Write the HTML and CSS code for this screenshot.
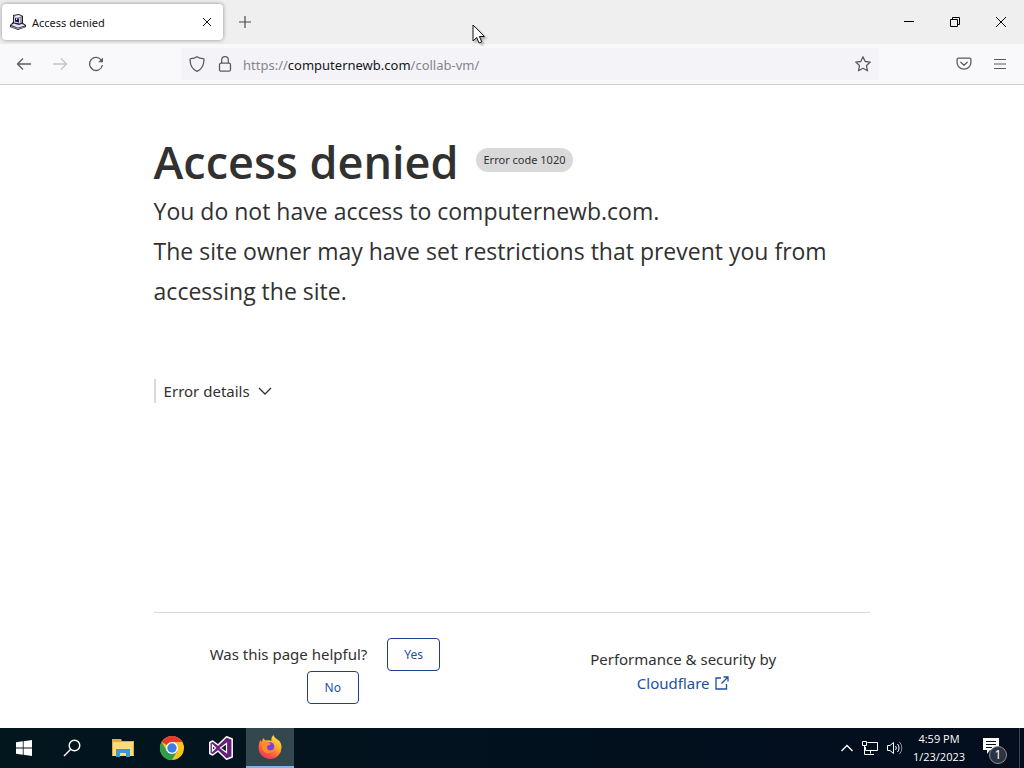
FILE: index.html
```html
<!DOCTYPE html>
<html lang="en">
<head>
    <meta charset="UTF-8">
    <meta name="viewport" content="width=device-width, initial-scale=1.0">
    <title>Access denied</title>
    <link rel="stylesheet" href="styles.css">
</head>
<body>
    <div class="tab-bar">
        <div class="tab">
            <svg class="favicon" width="16" height="16" viewBox="0 0 16 16">
                <path d="M3 1l6-1 4 2v7l3 2v2l-8 3-8-3v-2l3-3z" fill="#1c1c2c"/>
                <path d="M3 2l6-1 3 1.500-5 1z" fill="#f2f2f6"/>
                <path d="M4 3l6 .500v6L4 8.500z" fill="#dcdce6"/>
                <path d="M5 4l4 .500v4L5 7.500z" fill="#15156a"/>
                <path d="M6 4.500h1v1.500H6z" fill="#fff"/>
                <path d="M10 3.500l2-1v6l-2 1z" fill="#9a9aaa"/>
                <path d="M1 11l3-1.500 5 1.500 3-1.200 3 1.700-7 2.200z" fill="#e4e4ec"/>
                <path d="M1 12l7 2.200 7-2v.8l-7 2.200L1 13z" fill="#a3a3b2"/>
            </svg>
            <span class="tab-title">Access denied</span>
            <button class="icon-btn tab-close" aria-label="Close tab">
                <svg width="8" height="8" viewBox="0 0 8 8"><path d="M0 0l8 8M8 0L0 8" stroke="#15141a"/></svg>
            </button>
        </div>
        <button class="icon-btn new-tab" aria-label="New tab">
            <svg width="12" height="12" viewBox="0 0 12 12"><path d="M6 0v12M0 6h12" stroke="#4a4a52" stroke-width="1.2"/></svg>
        </button>
        <div class="window-buttons">
            <button class="icon-btn" aria-label="Minimize">
                <svg width="10" height="10" viewBox="0 0 10 10"><path d="M0 4.500h10" stroke="#000"/></svg>
            </button>
            <button class="icon-btn" aria-label="Restore">
                <svg width="10" height="10" viewBox="0 0 10 10" fill="none" stroke="#000"><path d="M.5 2.500h7v7h-7zM2.500 2.500v-2h7v7h-2"/></svg>
            </button>
            <button class="icon-btn" aria-label="Close">
                <svg width="10" height="10" viewBox="0 0 10 10"><path d="M0 0l10 10M10 0L0 10" stroke="#000"/></svg>
            </button>
        </div>
    </div>

    <div class="nav-bar">
        <div class="nav-buttons">
            <button class="icon-btn" aria-label="Back">
                <svg width="16" height="16" viewBox="0 0 16 16" fill="none" stroke="#5b5b66" stroke-width="1.3"><path d="M15 8H1.500M7 2.500L1.500 8 7 13.500"/></svg>
            </button>
            <button class="icon-btn" aria-label="Forward" disabled>
                <svg width="16" height="16" viewBox="0 0 16 16" fill="none" stroke="#c4c4c9" stroke-width="1.3"><path d="M1 8h13.500M9 2.500L14.500 8 9 13.500"/></svg>
            </button>
            <button class="icon-btn" aria-label="Reload">
                <svg width="16" height="16" viewBox="0 0 16 16"><path d="M13.500 4.500A6.500 6.500 0 1 0 14.400 9" fill="none" stroke="#5b5b66" stroke-width="1.3"/><path d="M15 1.500V6.300H10.200z" fill="#5b5b66"/></svg>
            </button>
        </div>
        <div class="url-bar">
            <svg width="16" height="16" viewBox="0 0 16 16" fill="none" stroke="#5b5b66" stroke-width="1.300"><path d="M8 .7C6.200 2 3.800 2.600 1.700 2.700c-.4 0-.7.3-.7.700C1.200 9 3.500 13.500 8 15.300 12.500 13.500 14.800 9 15 3.400c0-.4-.3-.7-.7-.7C12.200 2.600 9.800 2 8 .7z"/></svg>
            <svg width="16" height="16" viewBox="0 0 16 16" fill="none" stroke="#5b5b66" stroke-width="1.300"><rect x="2.500" y="7.200" width="11" height="8" rx="1.500"/><path d="M4.700 7V4a3.300 3.300 0 0 1 6.600 0v3"/></svg>
            <div class="url">https://<span class="host">computernewb.com</span>/collab-vm/</div>
            <button class="icon-btn" aria-label="Bookmark this page">
                <svg width="16" height="16" viewBox="0 0 16 16" fill="none" stroke="#5b5b66" stroke-width="1.300" stroke-linejoin="round"><path d="M8 .800l2.200 4.700 5.100.600-3.800 3.500 1 5.200L8 12.300l-4.500 2.500 1-5.200L.7 6.100l5.100-.6z"/></svg>
            </button>
        </div>
        <div class="nav-menu">
            <button class="icon-btn" aria-label="Save to Pocket">
                <svg width="16" height="16" viewBox="0 0 16 16" fill="none" stroke="#5b5b66" stroke-width="1.300" stroke-linecap="round" stroke-linejoin="round"><path d="M2.500 2.200h11c.8 0 1.400.6 1.400 1.400v3.200a6.900 6.400 0 0 1-13.800 0V3.600c0-.8.6-1.400 1.400-1.400zM4.800 6.300L8 9.300l3.200-3"/></svg>
            </button>
            <button class="icon-btn" aria-label="Open application menu">
                <svg width="16" height="16" viewBox="0 0 16 16"><path d="M2 3.500h12M2 8h12M2 12.500h12" stroke="#5b5b66" stroke-width="1.200"/></svg>
            </button>
        </div>
    </div>

    <main class="content">
        <div class="page">
            <header>
                <div class="title-row">
                    <h1>Access denied</h1>
                    <span class="code-label">Error code 1020</span>
                </div>
                <p>You do not have access to computernewb.com.</p>
                <p>The site owner may have set restrictions that prevent you from accessing the site.</p>
            </header>
            <button class="details-btn">
                Error details
                <svg width="14" height="8" viewBox="0 0 14 8"><path d="M1 1l6 6 6-6" fill="none" stroke="#313131" stroke-width="1.300"/></svg>
            </button>
            <footer>
                <div class="feedback">
                    Was this page helpful?
                    <button class="feedback-btn">Yes</button>
                    <button class="feedback-btn">No</button>
                </div>
                <div class="security">
                    Performance &amp; security by
                    <a href="#">Cloudflare
                        <svg width="14" height="14" viewBox="0 0 14 14" fill="none" stroke="#1d4fa3" stroke-width="1.300"><path d="M6 2H1v11h10.500V8M8.500 1H13v4.500M13 1L6.500 7.500"/></svg>
                    </a>
                </div>
            </footer>
        </div>
    </main>

    <div class="taskbar">
        <button class="task" aria-label="Start">
            <svg width="16" height="16" viewBox="0 0 16 16" fill="#fff"><path d="M0 2.300l6.800-1v6.300H0zM7.600 1.200L16 0v7.600H7.600zM0 8.400h6.800v6.300l-6.800-1zM7.600 8.400H16V16l-8.400-1.200z"/></svg>
        </button>
        <button class="task" aria-label="Search">
            <svg width="18" height="18" viewBox="0 0 18 18" fill="none" stroke="#fff" stroke-width="1.400"><circle cx="11.500" cy="6.500" r="5.300"/><path d="M7.700 10.300L1 17"/></svg>
        </button>
        <div class="apps">
            <button class="task" aria-label="File Explorer">
                <svg width="22" height="20" viewBox="0 0 22 20"><path d="M0 1h9l1 2h12v15H0z" fill="#e6a93a"/><path d="M1 4h20v14H1z" fill="#fbdc7b"/><path d="M4 11h14v8h-4v-4H8v4H4z" fill="#3f97cf"/></svg>
            </button>
            <button class="task" aria-label="Google Chrome">
                <svg width="24" height="24" viewBox="0 0 24 24"><circle cx="12" cy="12" r="12" fill="#f9c51c"/><path d="M12 12L1.600 6A12 12 0 0 1 22.400 6H12z" fill="#e33b2e"/><path d="M1.600 6A12 12 0 0 0 12 24l5.200-9H6.800z" fill="#2c9f4b"/><circle cx="12" cy="12" r="6" fill="#fff"/><circle cx="12" cy="12" r="4.700" fill="#3b7de9"/></svg>
            </button>
            <button class="task" aria-label="Visual Studio">
                <svg width="24" height="24" viewBox="0 0 24 24"><path d="M17.500.8L23.200 3v18l-5.700 2.200L9 15l-5.300 4L.8 17.500v-11L3.700 5 9 9z" fill="#68217a" stroke="#fff" stroke-width="1.500" stroke-linejoin="round"/><path d="M17.500 7.500v9L11.500 12zM3.500 9l3 3-3 3z" fill="#071a22" stroke="#fff" stroke-width="1.200"/></svg>
            </button>
            <button class="task active" aria-label="Firefox">
                <svg width="24" height="24" viewBox="0 0 24 24">
                    <defs>
                        <linearGradient id="flame" x1="0.900" y1="0" x2="0.300" y2="1"><stop offset="0" stop-color="#fff04a"/><stop offset="0.450" stop-color="#ffa52c"/><stop offset="0.750" stop-color="#ff5a3c"/><stop offset="1" stop-color="#f0306c"/></linearGradient>
                    </defs>
                    <path d="M15.500 0c.5 2.500 3 3.500 4.500 5 2 .8 3.500 4 3.500 7A11.500 11.500 0 0 1 .5 13C.5 9.500 1.600 7 2.300 5l1.500 2L5 3l2.500 2.500C10 5 12.500 5.300 13.500 6 13 3.500 14 1.500 15.500 0z" fill="url(#flame)"/>
                    <circle cx="12" cy="11.500" r="4.300" fill="#7a3fe0"/>
                    <path d="M4 8c2-1.500 4-1.500 6.500-.5L13 9c-1.500 1.500-4 1-4 3.500 0 3 4.500 4 7 1.500-1 4-6.500 5.500-9.500 3C4 15 3 11.500 4 8z" fill="#ff8a26"/>
                </svg>
            </button>
        </div>
        <div class="tray">
            <svg width="12" height="8" viewBox="0 0 12 8"><path d="M.5 7L6 1.500 11.500 7" fill="none" stroke="#fff" stroke-width="1.400"/></svg>
            <svg width="16" height="14" viewBox="0 0 16 14" fill="none" stroke="#fff"><path d="M5.500 1.500h10v8h-12V6M8.500 9.500v3M5 13.500h7M.5.500h4v4h-4zM2.500 4.500v9H6"/></svg>
            <svg width="16" height="14" viewBox="0 0 16 14" fill="none" stroke="#fff"><path d="M.5 4.500H3L6.500 1.500v11L3 9.500H.5zM8.500 5a3 3 0 0 1 0 4M10.500 3a6 6 0 0 1 0 8"/><path d="M12.500 1a9 9 0 0 1 0 12" stroke="#8b9198"/></svg>
        </div>
        <div class="clock">
            <div>4:59 PM</div>
            <div>1/23/2023</div>
        </div>
        <button class="notifications" aria-label="Notifications">
            <svg width="16" height="16" viewBox="0 0 16 16"><path d="M0 0h16v12H7l-3 4v-4H0z" fill="#fff"/><path d="M3 3.500h10M3 6.500h10M3 9.500h6" stroke="#071322"/></svg>
            <span class="count">1</span>
        </button>
    </div>

    <svg class="cursor" width="14" height="22" viewBox="0 0 14 22"><path d="M1 1v16l3.700-3.500L7 19l2.700-1.200-2.300-5.300h5z" fill="#fff" stroke="#111" stroke-width="1"/></svg>
</body>
</html>
```
FILE: styles.css
```css
* {
    box-sizing: border-box;
}
body {
    display: flex;
    flex-direction: column;
    min-height: 100vh;
    margin: 0;
    font-family: "Noto Sans", "Open Sans", sans-serif;
    color: #313131;
    background: #fff;
}
button {
    font-family: inherit;
    cursor: pointer;
}
svg {
    flex-shrink: 0;
}
.icon-btn {
    display: flex;
    align-items: center;
    justify-content: center;
    padding: 0;
    border: none;
    background: none;
}

/* tabs */
.tab-bar {
    display: flex;
    align-items: center;
    height: 44px;
    padding-left: 2px;
    background: #efefef;
}
.tab {
    display: flex;
    align-items: center;
    gap: 6px;
    width: 221px;
    height: 36px;
    padding: 0 8px;
    border-radius: 4px;
    background: #fff;
    box-shadow: 0 0 4px rgba(0, 0, 0, 0.4);
}
.tab-title {
    flex: 1;
    font-size: 11px;
    color: #15141a;
}
.tab-close {
    width: 16px;
    height: 16px;
}
.new-tab {
    width: 32px;
    height: 32px;
    margin-left: 6px;
}
.window-buttons {
    display: flex;
    margin-left: auto;
}
.window-buttons .icon-btn {
    width: 46px;
    height: 30px;
}

/* toolbar */
.nav-bar {
    display: flex;
    align-items: center;
    height: 41px;
    padding: 0 8px;
    border-bottom: 1px solid #ccccd0;
    background: #f9f9fb;
}
.nav-buttons {
    display: flex;
    gap: 4px;
}
.nav-buttons .icon-btn,
.nav-menu .icon-btn {
    width: 32px;
    height: 32px;
}
.url-bar {
    display: flex;
    flex: 1;
    align-items: center;
    gap: 12px;
    height: 32px;
    margin: 0 69px;
    padding: 0 8px;
    border-radius: 4px;
    background: #f4f4f8;
}
.url {
    flex: 1;
    margin-left: -2px;
    font-size: 13px;
    line-height: 20px;
    padding-top: 2px;
    color: #85858d;
}
.host {
    color: #15141a;
}
.nav-menu {
    display: flex;
    gap: 4px;
}

/* error page */
.content {
    display: flex;
    flex: 1;
    justify-content: center;
}
.page {
    display: flex;
    flex-direction: column;
    width: 70%;
    padding-top: 47px;
}
.title-row {
    display: flex;
    gap: 17px;
    align-items: center;
    height: 59px;
}
h1 {
    margin: 0;
    font-family: "Open Sans", sans-serif;
    font-size: 45px;
    font-weight: 600;
    line-height: 60px;
}
.code-label {
    margin-bottom: 4px;
    padding: 0 8px;
    border-radius: 12px;
    background: #d9d9d9;
    font-size: 11px;
    line-height: 24px;
}
header p {
    margin: 0;
    font-family: "Open Sans", sans-serif;
    font-size: 23px;
    line-height: 40px;
}
.details-btn {
    display: flex;
    gap: 8px;
    align-items: center;
    align-self: flex-start;
    margin-top: 68px;
    padding: 0 8px;
    border: none;
    border-left: 2px solid #d9d9d9;
    background: none;
    color: #313131;
    font-size: 15px;
    line-height: 24px;
}
footer {
    display: flex;
    margin-top: auto;
    padding: 25px 0 24px;
    border-top: 1px solid #d9d9d9;
    font-size: 15px;
    text-align: center;
}
.feedback,
.security {
    width: 50%;
    padding-right: 16px;
}
.feedback {
    padding-left: 40px;
    padding-right: 56px;
    line-height: 33px;
}
.feedback-btn {
    min-width: 52px;
    height: 33px;
    margin-left: 16px;
    padding: 0 16px;
    border: 1px solid #1d3f8f;
    border-radius: 4px;
    background: #fff;
    color: #1d4fa3;
    font-size: 12px;
    vertical-align: top;
}
.security {
    padding-top: 9px;
    line-height: 24px;
}
.security a {
    display: block;
    color: #1d4fa3;
    text-decoration: none;
}
.security svg {
    margin-left: 2px;
    vertical-align: -1px;
}

/* taskbar */
.taskbar {
    display: flex;
    align-items: center;
    height: 40px;
    background: linear-gradient(90deg, #02161e, #030d1e);
    color: #fff;
}
.task {
    display: flex;
    align-items: center;
    justify-content: center;
    width: 48px;
    height: 40px;
    padding: 0;
    border: none;
    background: none;
}
.apps {
    display: flex;
    gap: 1px;
    margin-left: 3px;
}
.task.active {
    border-bottom: 2px solid #76b9ed;
    background: #33474f;
}
.tray {
    display: flex;
    align-items: center;
    gap: 9px;
    margin-left: auto;
}
.clock {
    width: 72px;
    font-family: "Open Sans", sans-serif;
    font-size: 11px;
    line-height: 18px;
    text-align: center;
}
.notifications {
    position: relative;
    width: 45px;
    height: 40px;
    margin-right: 4px;
    padding: 0 12px 0 0;
    border: none;
    border-right: 1px solid #3c4653;
    background: none;
}
.count {
    position: absolute;
    right: 12px;
    bottom: 4px;
    width: 18px;
    height: 18px;
    border: 1px solid #8b9198;
    border-radius: 50%;
    background: #2b3340;
    color: #fff;
    font-size: 12px;
    line-height: 16px;
}

/* mouse pointer */
.cursor {
    position: absolute;
    top: 24px;
    left: 472px;
    filter: drop-shadow(2px 2px 1px rgba(0, 0, 0, 0.3));
}
```
